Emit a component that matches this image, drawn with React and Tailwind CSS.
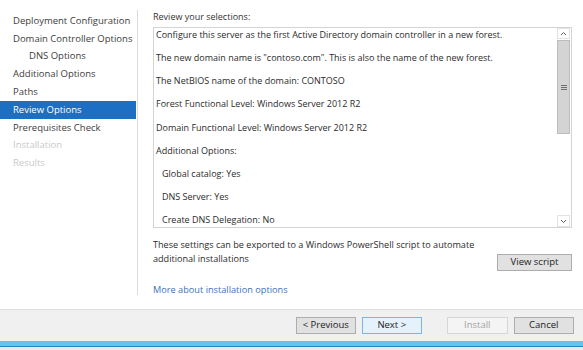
import React from "react";

const navItems = [
  { label: "Deployment Configuration" },
  { label: "Domain Controller Options" },
  { label: "DNS Options", indent: true },
  { label: "Additional Options" },
  { label: "Paths" },
  { label: "Review Options", active: true },
  { label: "Prerequisites Check" },
  { label: "Installation", disabled: true },
  { label: "Results", disabled: true },
];

const lines = [
  { text: "Configure this server as the first Active Directory domain controller in a new forest." },
  { text: 'The new domain name is "contoso.com". This is also the name of the new forest.' },
  { text: "The NetBIOS name of the domain: CONTOSO" },
  { text: "Forest Functional Level: Windows Server 2012 R2" },
  { text: "Domain Functional Level: Windows Server 2012 R2" },
  { text: "Additional Options:" },
  { text: "Global catalog: Yes", indent: true },
  { text: "DNS Server: Yes", indent: true },
  { text: "Create DNS Delegation: No", indent: true },
];

function Button({ children, variant = "normal", className = "" }) {
  const styles = {
    normal: "bg-[#e1e1e1] border-[#adadad] text-[#222]",
    focus: "bg-[#e5f1fb] border-[#7eb4ea] text-[#222]",
    disabled: "bg-[#f4f4f4] border-[#d6d6d6] text-[#a3a3a3]",
  };
  return (
    <div
      className={`h-[17px] border flex items-center justify-center text-[9.5px] whitespace-nowrap ${styles[variant]} ${className}`}
    >
      {children}
    </div>
  );
}

export default function App() {
  return (
    <div
      className="w-[583px] h-[350px] bg-white flex flex-col overflow-hidden text-[#333]"
      style={{ fontFamily: '"Segoe UI", "Open Sans", "Noto Sans", sans-serif' }}
    >
      <div className="flex h-[309px]">
        <nav className="w-[138px] shrink-0 mt-[10px] h-[285px] border-r border-[#dcdcdc] pt-[2px]">
          {navItems.map((item) => (
            <div
              key={item.label}
              className={`h-[17.8px] flex items-center text-[9.5px] whitespace-nowrap ${
                item.indent ? "pl-[29px]" : "pl-[13px]"
              } ${
                item.active
                  ? "bg-[#1c6fc2] text-white mr-[1px]"
                  : item.disabled
                  ? "text-[#c9c9c9]"
                  : "text-[#3d3d3d]"
              }`}
            >
              {item.label}
            </div>
          ))}
        </nav>

        <main className="flex-1 pl-[15px] pr-[11px] pt-[10px]">
          <div className="h-[17px] text-[9px] text-[#333] leading-[14px]">
            Review your selections:
          </div>

          <div className="h-[201px] border border-[#d4d4d4] flex">
            <div className="flex-1 pl-[2px]">
              {lines.map((line) => (
                <div
                  key={line.text}
                  className={`h-[23.15px] leading-[14px] text-[9px] text-[#2b2b2b] whitespace-nowrap ${
                    line.indent ? "pl-[6px]" : ""
                  }`}
                >
                  {line.text}
                </div>
              ))}
            </div>
            <div className="w-[14px] pr-[1px] flex flex-col">
              <div className="h-[11px] border border-[#e2e2e2] flex items-center justify-center">
                <svg width="7" height="5" viewBox="0 0 7 5">
                  <path d="M1 4 L3.5 1.5 L6 4" fill="none" stroke="#606060" strokeWidth="1" />
                </svg>
              </div>
              <div className="h-[94px] mt-[1px] bg-[#d4d4d4] border border-[#bdbdbd] flex items-center justify-center">
                <svg width="6" height="5" viewBox="0 0 6 5">
                  <path d="M0 0.5 H6 M0 2.5 H6 M0 4.5 H6" stroke="#707070" strokeWidth="1" />
                </svg>
              </div>
              <div className="flex-1" />
              <div className="h-[12px] border border-[#e2e2e2] flex items-center justify-center">
                <svg width="7" height="5" viewBox="0 0 7 5">
                  <path d="M1 1 L3.5 3.5 L6 1" fill="none" stroke="#606060" strokeWidth="1" />
                </svg>
              </div>
            </div>
          </div>

          <div className="flex items-end justify-between mt-[10px]">
            <div className="text-[9.1px] leading-[14px] text-[#2b2b2b]">
              <div>These settings can be exported to a Windows PowerShell script to automate</div>
              <div>additional installations</div>
            </div>
            <Button className="w-[75px] mb-[-5px]">View script</Button>
          </div>

          <div className="mt-[17px] text-[9.2px] leading-[14px] text-[#3b74bb]">
            More about installation options
          </div>
        </main>
      </div>

      <footer className="h-[32px] bg-[#f0f0f0] border-t border-[#dedede] flex items-center pl-[296px] pr-[9px]">
        <Button className="w-[60px]">&lt; Previous</Button>
        <Button variant="focus" className="w-[61px] ml-[6px]">Next &gt;</Button>
        <Button variant="disabled" className="w-[61px] ml-[25px]">Install</Button>
        <Button className="w-[61px] ml-[6px]">Cancel</Button>
      </footer>
      <div className="h-[6px] bg-[#63c5e9] border-b-[1px] border-[#2e82ba]" />
      <div className="flex-1 bg-[#ebebeb]" />
    </div>
  );
}
